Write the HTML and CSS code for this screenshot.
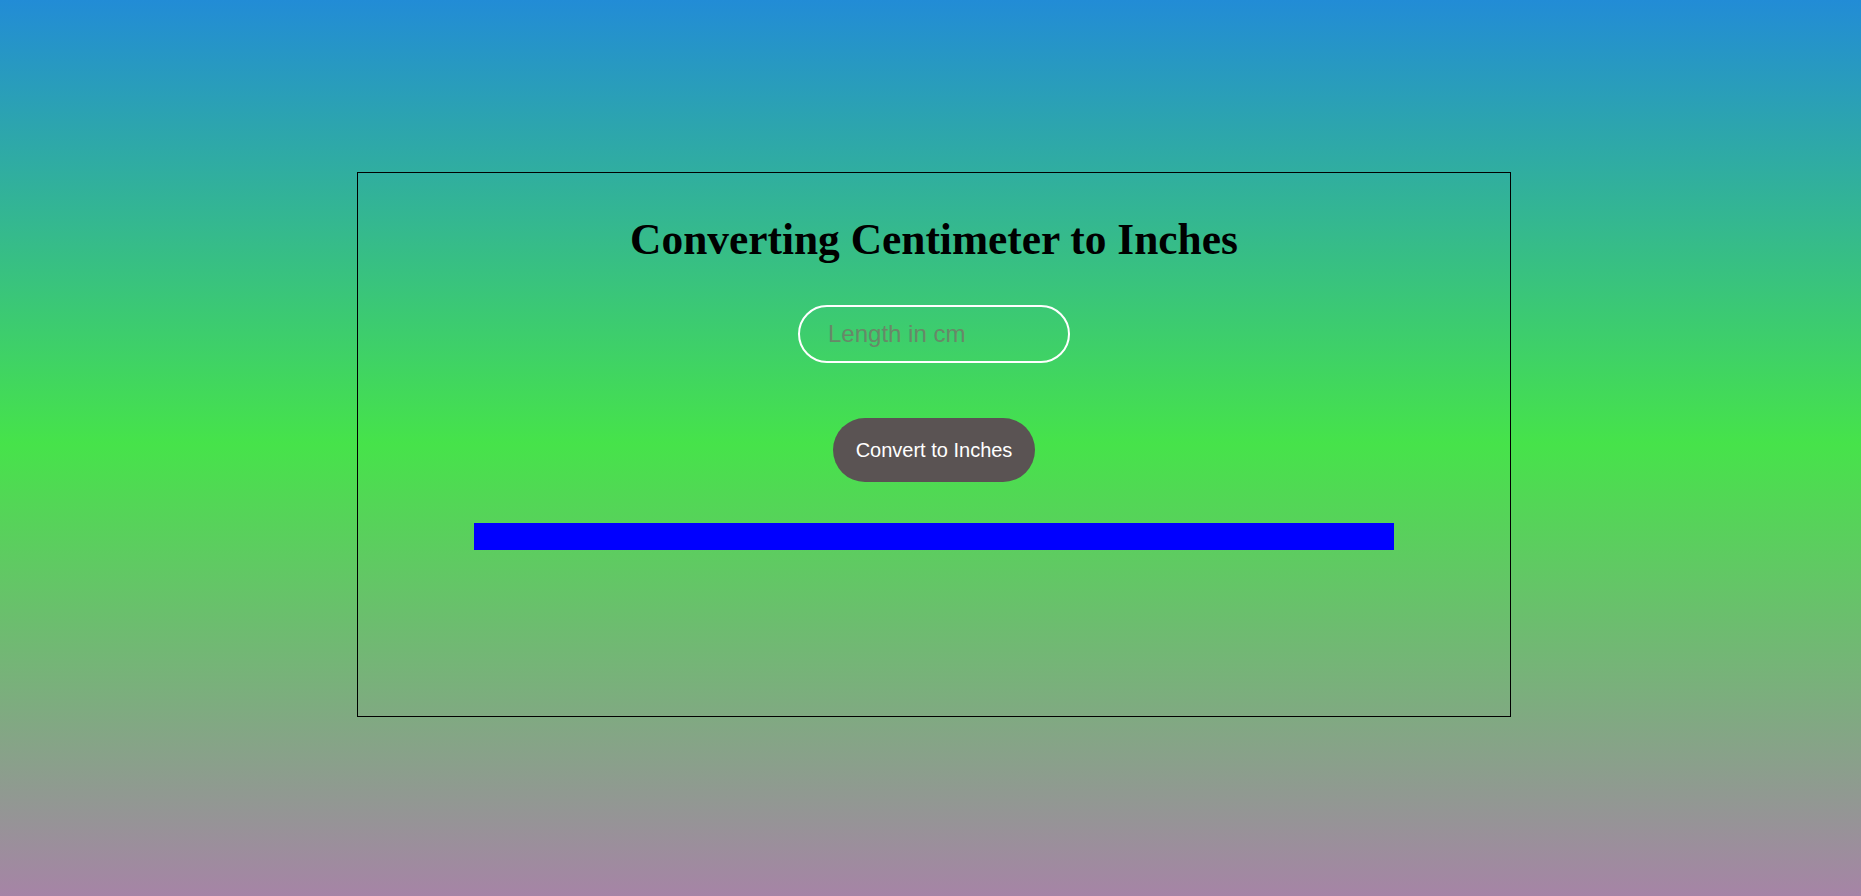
FILE: index.html
```html
<!DOCTYPE html>
<html>
<head>
<meta charset="utf-8">
<title>Converting Centimeter to Inches</title>
<link rel="stylesheet" href="styles.css">
</head>
<body>
  <div class="box">
    <h1 class="title">Converting Centimeter to Inches</h1>
    <input class="cm-input" type="text" placeholder="Length in cm">
    <button class="convert-btn">Convert to Inches</button>
    <div class="result"></div>
  </div>
</body>
</html>
```

FILE: styles.css
```css
html {
  height: 100%;
}
body {
  margin: 0;
  min-height: 100vh;
  background: linear-gradient(to bottom, #228cd6 0%, #46e34a 49.5%, #a684a6 100%);
  overflow: hidden;
}
.box {
  box-sizing: border-box;
  width: 1154px;
  height: 545px;
  margin: 172px 0 0 357px;
  border: 1px solid #000;
  display: flex;
  flex-direction: column;
  align-items: center;
  padding-top: 41px;
}
.title {
  margin: 0;
  font-family: "Liberation Serif", "Times New Roman", serif;
  font-size: 43.4px;
  font-weight: bold;
  line-height: 50px;
  color: #000;
  white-space: nowrap;
  text-align: center;
}
.cm-input {
  box-sizing: border-box;
  margin-top: 41px;
  width: 272px;
  height: 58px;
  border: 2px solid #fff;
  border-radius: 30px;
  background: transparent;
  padding: 0 0 0 28px;
  font-family: "Liberation Sans", Arial, sans-serif;
  font-size: 24px;
  color: #333;
  outline: none;
}
.cm-input::placeholder {
  color: #688868;
}
.convert-btn {
  box-sizing: border-box;
  margin-top: 55px;
  width: 202px;
  height: 64px;
  border: none;
  border-radius: 32px;
  background: #5a5353;
  color: #fff;
  font-family: "Liberation Sans", Arial, sans-serif;
  font-size: 20px;
  padding: 0;
}
.result {
  margin-top: 41px;
  width: 920px;
  height: 27px;
  background: #0000ff;
}
```
